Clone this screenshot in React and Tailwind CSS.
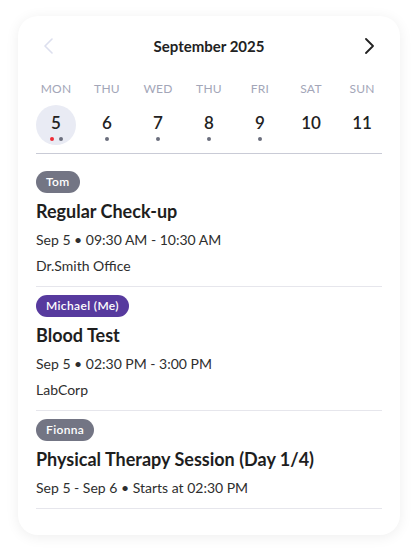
import React from "react";

const days = [
  { d: "MON", n: 5, sel: true, dots: ["red", "gray"] },
  { d: "THU", n: 6, dots: ["gray"] },
  { d: "WED", n: 7, dots: ["gray"] },
  { d: "THU", n: 8, dots: ["gray"] },
  { d: "FRI", n: 9, dots: ["gray"] },
  { d: "SAT", n: 10, dots: [] },
  { d: "SUN", n: 11, dots: [] },
];

const events = [
  { who: "Tom", purple: false, title: "Regular Check-up", time: "Sep 5 • 09:30 AM - 10:30 AM", place: "Dr.Smith Office" },
  { who: "Michael (Me)", purple: true, title: "Blood Test", time: "Sep 5 • 02:30 PM - 3:00 PM", place: "LabCorp" },
  { who: "Fionna", purple: false, title: "Physical Therapy Session (Day 1/4)", time: "Sep 5 - Sep 6 • Starts at 02:30 PM" },
];

export default function App() {
  return (
    <div className="w-[418px] h-[556px] bg-white pt-4 pl-[18px]" style={{ fontFamily: "Lato, 'Noto Sans', sans-serif" }}>
      <div className="w-[382px] h-[519px] bg-white rounded-[20px] shadow-[0_2px_14px_rgba(0,0,0,0.07)] px-[18px] pt-[18px]">
        <div className="flex items-center justify-between h-6 px-[6px]">
          <svg width="14" height="16" viewBox="0 0 14 16" fill="none" stroke="#dcdfee" strokeWidth="1.6" strokeLinecap="round" strokeLinejoin="round">
            <path d="M10 1 L3 8 L10 15" />
          </svg>
          <div className="text-[15px] font-bold text-[#222]">September 2025</div>
          <svg width="14" height="16" viewBox="0 0 14 16" fill="none" stroke="#222" strokeWidth="1.8" strokeLinecap="round" strokeLinejoin="round">
            <path d="M4 1 L11 8 L4 15" />
          </svg>
        </div>
        <div className="grid grid-cols-7 w-[357px] -ml-[5.5px] mt-[23px]">
          {days.map((x, i) => (
            <div key={i} className="flex flex-col items-center">
              <div className="text-[12px] text-[#a3a6b8] leading-4 tracking-[0.02em]">{x.d}</div>
              <div className={"mt-[8px] w-10 h-10 rounded-full flex flex-col items-center " + (x.sel ? "bg-[#e9ebf4]" : "")}>
                <div className="text-[17px] font-semibold text-[#222] leading-5 mt-[8px]">{x.n}</div>
                <div className="flex gap-[5px] mt-[4px] h-[4px]">
                  {x.dots.map((c, j) => (
                    <span key={j} className={"w-[4px] h-[4px] rounded-full " + (c === "red" ? "bg-[#ee2b36]" : "bg-[#6b6e7d]")} />
                  ))}
                </div>
              </div>
            </div>
          ))}
        </div>
        <div className="h-px bg-[#c9cbd6] mt-[8px]" />
        {events.map((e, i) => (
          <div key={i} className={"border-b border-[#e6e6ec] pb-[8px] " + (i === 0 ? "pt-[17px]" : "pt-[8px]")}>
            <div className={"flex w-fit items-center h-[22px] px-[10px] rounded-full text-[12px] font-semibold text-white tracking-[0.03em] " + (e.purple ? "bg-[#573a9e]" : "bg-[#737584]")}>{e.who}</div>
            <div className="text-[18px] font-bold text-[#1e1e1e] mt-[6px] leading-6">{e.title}</div>
            <div className="text-[14px] text-[#2e2e2e] mt-[5px] leading-6">{e.time}</div>
            {e.place && <div className="text-[14px] text-[#2e2e2e] mt-[2px] leading-6">{e.place}</div>}
          </div>
        ))}
      </div>
    </div>
  );
}
